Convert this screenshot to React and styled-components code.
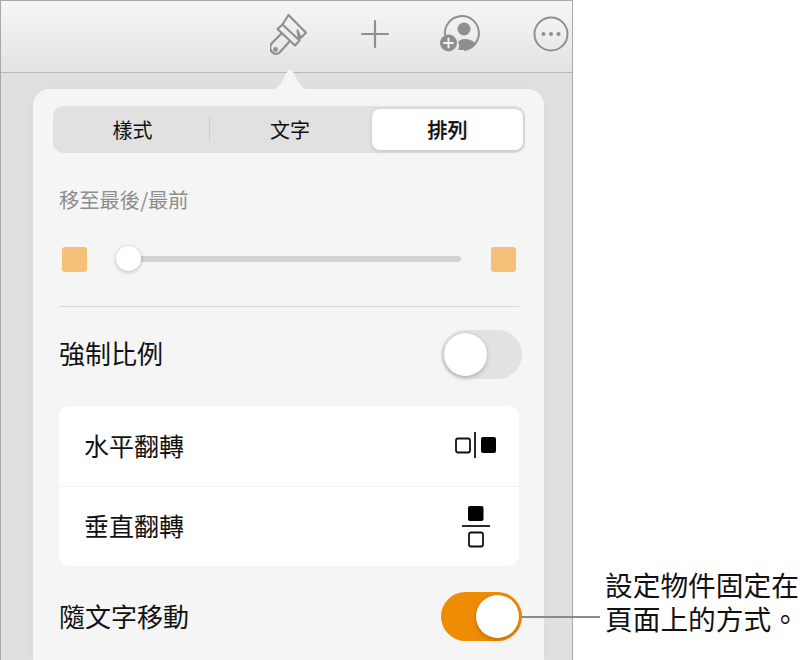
import React from "react";
import styled, { createGlobalStyle } from "styled-components";

const Global = createGlobalStyle`
  html, body { margin: 0; padding: 0; background: #fff; }
  body { font-family: "Noto Sans CJK TC", "Liberation Sans", sans-serif; color: #111; }
  #root { width: 803px; height: 660px; }
`;
const Page = styled.div`
  position: relative; width: 803px; height: 660px; overflow: hidden; background: #fff; display: flex;
`;
const Device = styled.div`
  width: 573px; height: 660px; box-sizing: border-box; flex: none;
  border: solid #a9a9a9; border-width: 1px 1px 0 1px; background: #e0e0e0;
  display: flex; flex-direction: column;
`;
const Toolbar = styled.div`
  height: 72px; flex: none; box-sizing: border-box; border-bottom: 1px solid #b9b9b9;
  background: linear-gradient(#f6f6f6, #e3e3e3); display: flex; align-items: center;
  padding: 0 0 6px 269px; color: #8f8f8f;
`;
const ToolSlot = styled.div`
  display: flex; flex: none; margin-left: ${p => p.$gap || 0}px;
`;
const Popover = styled.div`
  position: relative; margin: 16px 28px 0 32px; flex: 1; box-sizing: border-box;
  background: #f5f5f5; border-radius: 16px 16px 0 0; padding: 17px 19px 0 20px;
  box-shadow: 0 0 14px rgba(0,0,0,.03);
`;
const Arrow = styled.svg`
  position: absolute; left: 235px; top: -21px; width: 44px; height: 22px;
`;
const Segments = styled.div`
  width: 472px; height: 47px; box-sizing: border-box; padding: 3px 2px; border-radius: 10px;
  background: #e1e1e1; display: grid; grid-template-columns: 155px 162px 151px; align-items: stretch;
`;
const Segment = styled.div`
  position: relative; display: flex; align-items: center; justify-content: center; font-size: 20px;
  border-radius: 8px; font-weight: ${p => (p.$on ? 500 : 400)}; color: #111;
  -webkit-text-stroke: ${p => (p.$on ? "0.3px #111" : "0")};
  background: ${p => (p.$on ? "#fff" : "transparent")};
  box-shadow: ${p => (p.$on ? "0 1px 4px rgba(0,0,0,.14)" : "none")};
  &:nth-child(2) { padding-right: 2px; }
`;
const SegmentSep = styled.span`
  position: absolute; right: 0; top: 8px; height: 25px; width: 1px; background: #cdcdcd;
`;
const Body = styled.div`
  padding: 0 0 0 6px; width: 460px;
`;
const SectionLabel = styled.div`
  font-size: 20.3px; line-height: 24px; margin-top: 34px; color: #8d8d8d;
`;
const SliderRow = styled.div`
  display: flex; align-items: center; height: 26px; margin-top: 35px; padding-left: 3px;
`;
const Swatch = styled.div`
  width: 25px; height: 25px; flex: none; border-radius: 3px; background: #f5c078;
`;
const Track = styled.div`
  position: relative; width: 345px; height: 6px; margin: 0 30px 0 29px; background: #d2d2d2; border-radius: 3px;
`;
const Thumb = styled.div`
  position: absolute; left: 0; top: -10px; width: 25px; height: 25px; border-radius: 50%;
  background: #fff; box-shadow: 0 1px 4px rgba(0,0,0,.25);
`;
const Divider = styled.div`
  height: 1px; background: #d8d8d8; margin-top: 34px;
`;
const ToggleRow = styled.div`
  display: flex; align-items: center; justify-content: space-between; width: 463px; height: 50px;
  font-size: 26px; line-height: 50px; margin-left: 6px; box-sizing: border-box;
  margin-top: ${p => p.$top}px;
`;
const RowText = styled.span`
  position: relative; top: ${p => p.$nudge || 0}px;
`;
const Switch = styled.div`
  width: 81px; height: 49px; border-radius: 25px; flex: none; position: relative;
  background: ${p => (p.$on ? "#ef8c03" : "#e2e2e2")};
`;
const Knob = styled.div`
  position: absolute; top: 3px; left: ${p => (p.$on ? "35px" : "3px")}; width: 43px; height: 43px; border-radius: 50%;
  background: #fff; box-shadow: 0 0 0 1px rgba(0,0,0,.03), 0 2px 5px rgba(0,0,0,.2);
`;
const Card = styled.div`
  margin: 27px 0 0 6px; width: 460px; background: #fff; border-radius: 11px; overflow: hidden;
`;
const CardRow = styled.div`
  height: 80px; box-sizing: border-box; display: flex; align-items: center; justify-content: space-between;
  padding: 0 21px 0 25px; font-size: 25px;
  & + & { border-top: 1px solid #f0f0f0; }
`;
const FlipIcon = styled.svg`
  width: 44px; height: 44px; flex: none;
`;
const Callout = styled.div`
  position: absolute; left: 605px; top: 567px; font-size: 27.7px; line-height: 34px; color: #111; white-space: nowrap;
`;
const Leader = styled.div`
  position: absolute; left: 522px; top: 616px; width: 78px; height: 2px; background: #8a8a8a;
`;

const Brush = () => (
  <svg width="44" height="44" viewBox="6 3 44 44" fill="none" stroke="currentColor" strokeWidth="2.2" strokeLinejoin="round" strokeLinecap="round">
    <path d="M24.5 6 L42 23.7 L36.5 29 L33.5 21.5 L35.5 31.5 L31 36.5 L13.5 20 L18.5 15.5 Z" />
    <path d="M18.5 15.5 L34 30" />
    <path d="M17.5 24.5 L8 34 C5 37 6 41 8 43 C10 45.5 13.5 45.5 16 43 L25.5 32.5" />
    <circle cx="11.5" cy="40.5" r="1.3" />
  </svg>
);
const Plus = () => (
  <svg width="30" height="30" viewBox="0 0 30 30" stroke="currentColor" strokeWidth="2.2" strokeLinecap="round">
    <path d="M15 2 V28 M2 15 H28" />
  </svg>
);
const Person = () => (
  <svg width="42" height="44" viewBox="0 -3 42 44" fill="#8f8f8f">
    <path d="M5 20 A17 17 0 1 1 24 35" fill="none" stroke="#8f8f8f" strokeWidth="2" />
    <circle cx="24" cy="14" r="6.5" />
    <path d="M18 35 C19.5 32 19.5 29 18 27 C19.5 25 22 24 24 24 C29 24 33.5 25.5 36 29 A17 17 0 0 1 24 35 Z" />
    <circle cx="8.5" cy="28" r="8.5" />
    <path d="M8.5 23.5 V32.5 M4 28 H13" stroke="#f0f0f0" strokeWidth="2" strokeLinecap="round" />
  </svg>
);
const More = () => (
  <svg width="36" height="36" viewBox="0 0 36 36" fill="#8f8f8f">
    <circle cx="18" cy="18" r="16.5" fill="none" stroke="#8f8f8f" strokeWidth="2" />
    <circle cx="10.5" cy="18" r="2" />
    <circle cx="18" cy="18" r="2" />
    <circle cx="25.5" cy="18" r="2" />
  </svg>
);
const FlipH = () => (
  <FlipIcon viewBox="0 0 44 44">
    <rect x="2" y="14.5" width="14" height="14" rx="2" fill="none" stroke="#111" strokeWidth="1.8" />
    <rect x="27" y="13" width="15" height="16" rx="2" fill="#000" />
    <path d="M21 8 V34" stroke="#111" strokeWidth="1.8" />
  </FlipIcon>
);
const FlipV = () => (
  <FlipIcon viewBox="0 0 44 44">
    <rect x="14" y="1" width="15.5" height="15" rx="2" fill="#000" />
    <rect x="15" y="27.5" width="14" height="14" rx="2" fill="none" stroke="#111" strokeWidth="1.8" />
    <path d="M8 21 H36" stroke="#111" strokeWidth="1.8" />
  </FlipIcon>
);

export default function App() {
  return (
    <Page>
      <Global />
      <Device>
        <Toolbar>
          <ToolSlot><Brush /></ToolSlot>
          <ToolSlot $gap={46}><Plus /></ToolSlot>
          <ToolSlot $gap={50}><Person /></ToolSlot>
          <ToolSlot $gap={51}><More /></ToolSlot>
        </Toolbar>
        <Popover>
          <Arrow viewBox="0 0 44 22">
            <path d="M0 22 C8 22 10 19 13 15 L19 4 C20.5 1 23.5 1 25 4 L31 15 C34 19 36 22 44 22 Z" fill="#f5f5f5" />
          </Arrow>
          <Segments>
            <Segment>樣式<SegmentSep /></Segment>
            <Segment>文字</Segment>
            <Segment $on>排列</Segment>
          </Segments>
          <Body>
            <SectionLabel>移至最後/最前</SectionLabel>
            <SliderRow>
              <Swatch />
              <Track><Thumb /></Track>
              <Swatch />
            </SliderRow>
            <Divider />
          </Body>
          <ToggleRow $top={22}><RowText $nudge={-1}>強制比例</RowText><Switch><Knob /></Switch></ToggleRow>
          <Card>
            <CardRow><RowText $nudge={-1}>水平翻轉</RowText><FlipH /></CardRow>
            <CardRow><RowText $nudge={-2}>垂直翻轉</RowText><FlipV /></CardRow>
          </Card>
          <ToggleRow $top={25}><RowText>隨文字移動</RowText><Switch $on><Knob $on /></Switch></ToggleRow>
        </Popover>
      </Device>
      <Leader />
      <Callout>設定物件固定在<br />頁面上的方式。</Callout>
    </Page>
  );
}
